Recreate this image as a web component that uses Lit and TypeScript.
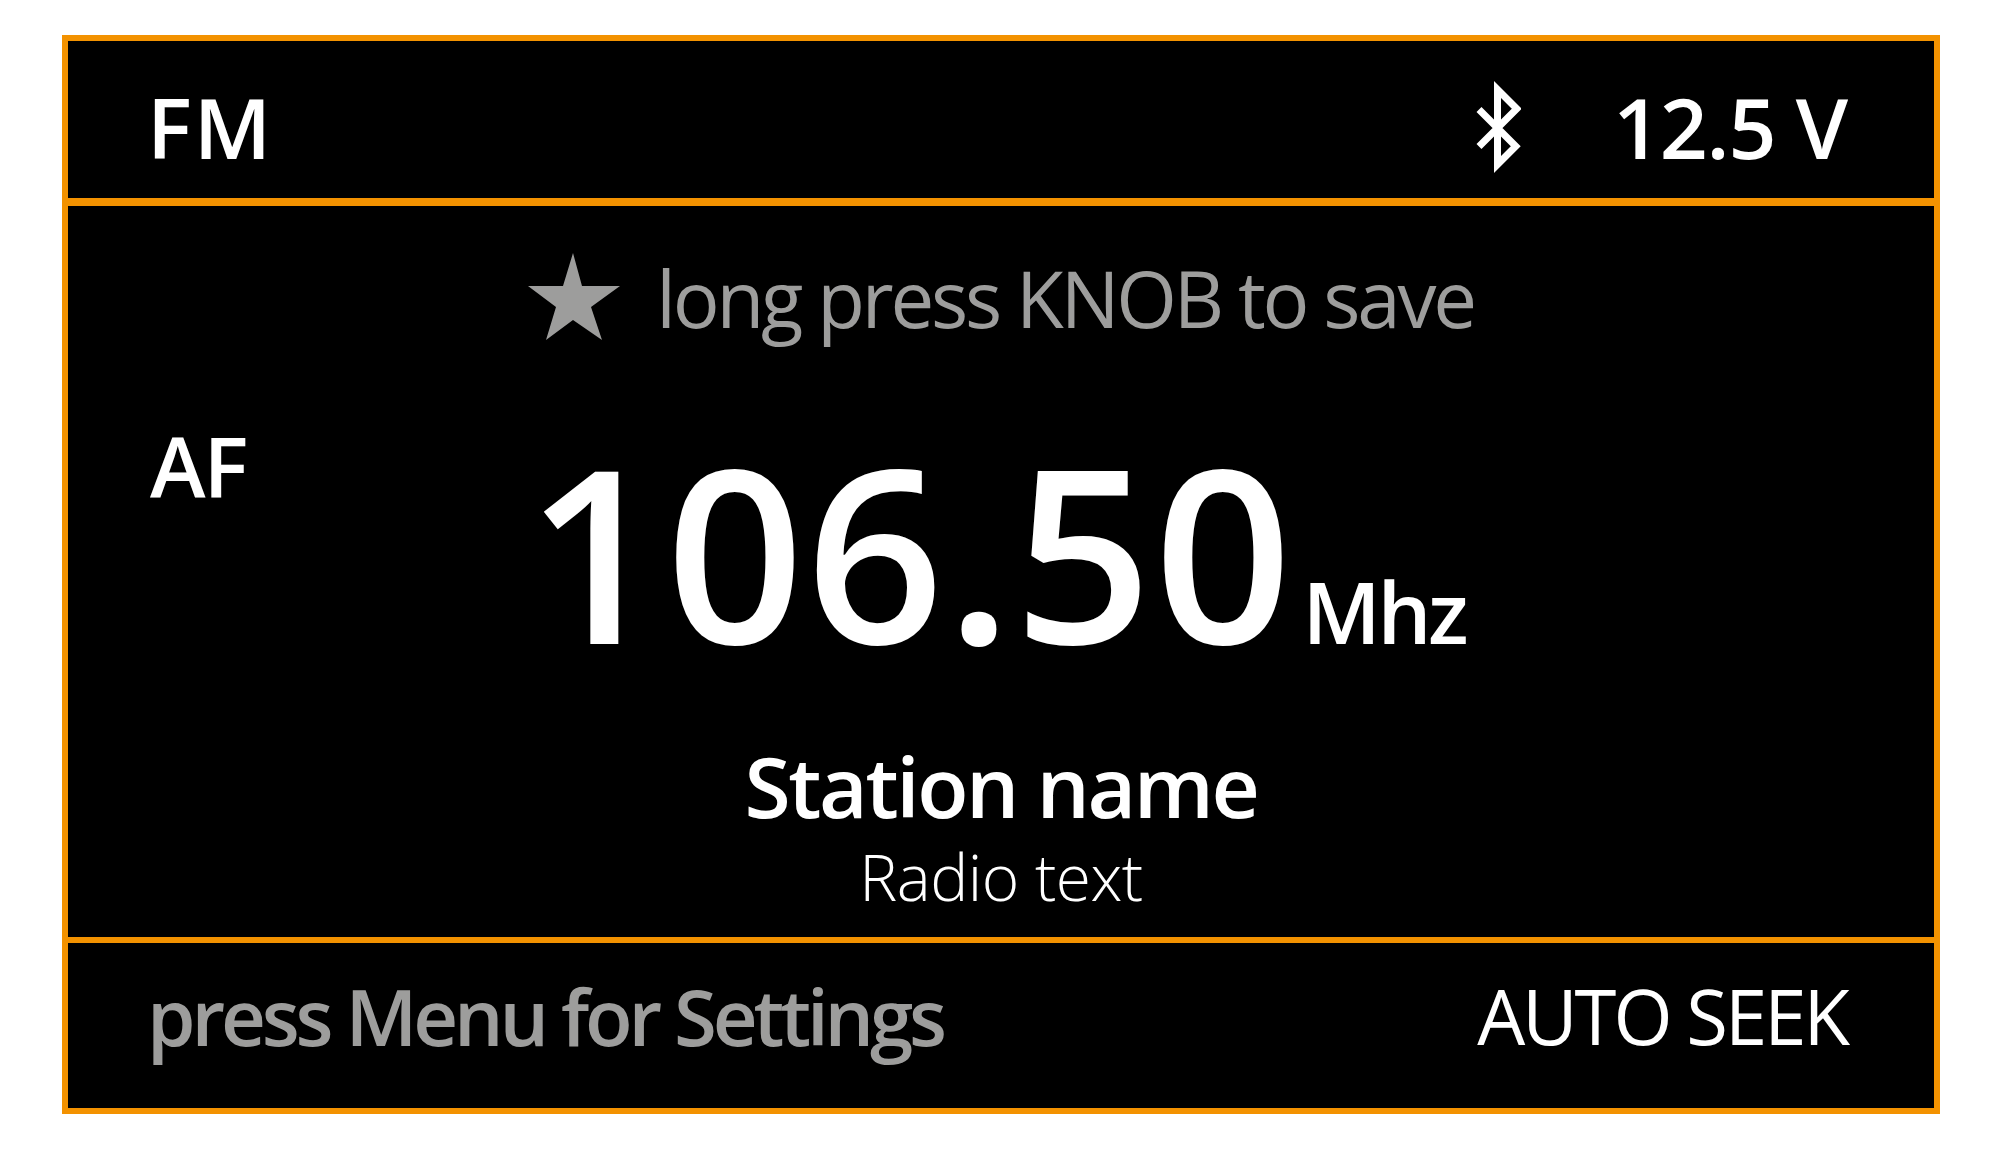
import { LitElement, html, css } from 'lit';
import { customElement } from 'lit/decorators.js';

@customElement('app-root')
class AppRoot extends LitElement {
    static styles = css`
    :host {
        display: block;
        background: #fff;
        height: 1154px;
        padding: 35px 60px 40px 62px;
        box-sizing: border-box;
        font-family: "Open Sans", "Noto Sans", sans-serif;
        color: #fff;
    }
    .radio {
        height: 1079px;
        box-sizing: border-box;
        border: 6px solid #f39200;
        background: #000;
        display: flex;
        flex-direction: column;
    }
    .top, .bottom {
        display: flex;
        justify-content: space-between;
        align-items: center;
        padding: 0 87px 0 79px;
    }
    .top {
        height: 165px;
        box-sizing: border-box;
        padding-top: 14px;
        border-bottom: 8px solid #f39200;
    }
    .bottom {
        flex: 1;
        padding-bottom: 20px;
        border-top: 6px solid #f39200;
    }
    .label {
        font-size: 84px;
        font-weight: 600;
        line-height: 1;
    }
    .band {
        letter-spacing: 2px;
    }
    .volt {
        letter-spacing: -1.2px;
    }
    .alt {
        letter-spacing: -2px;
    }
    .status {
        display: flex;
        align-items: center;
        gap: 92px;
    }
    .status svg {
        display: block;
    }
    .main {
        height: 731px;
        display: grid;
        grid-template-columns: 1fr auto 1fr;
    }
    .af {
        padding: 218px 0 0 82px;
    }
    .center {
        display: flex;
        flex-direction: column;
        align-items: center;
        padding-top: 46px;
    }
    .save {
        display: flex;
        align-items: center;
        gap: 36px;
        color: #9d9d9c;
        font-size: 78px;
        line-height: 92px;
        letter-spacing: -3.2px;
        white-space: nowrap;
    }
    .save svg {
        display: block;
        flex: none;
        margin-bottom: 4px;
    }
    .freq {
        display: flex;
        align-items: baseline;
        margin-top: 116px;
        margin-left: -11px;
        white-space: nowrap;
    }
    .value {
        font-size: 242px;
        font-weight: 600;
        line-height: 180px;
        letter-spacing: 1.6px;
    }
    .unit {
        font-size: 85px;
        font-weight: 600;
        margin-left: 9px;
        line-height: 1;
        letter-spacing: -3.5px;
    }
    .station {
        margin-top: 90px;
        font-size: 84px;
        font-weight: 600;
        line-height: 84px;
        letter-spacing: -2.4px;
        white-space: nowrap;
    }
    .text {
        margin-top: 13px;
        font-size: 64px;
        font-weight: 300;
        line-height: 72px;
        letter-spacing: -0.5px;
        white-space: nowrap;
    }
    .hint {
        color: #9d9d9c;
        font-size: 78px;
        font-weight: 600;
        line-height: 1;
        letter-spacing: -4.15px;
    }
    .mode {
        font-size: 76px;
        line-height: 1;
        letter-spacing: -3px;
    }
    `;
    render() {
        return html`
        <div class="radio">
            <div class="top">
                <div class="label band">FM</div>
                <div class="status">
                    <svg width="47" height="92" viewBox="0 0 47 92" fill="none" stroke="#fff" stroke-width="7">
                        <path d="M5 28.5L41.75 65.25L23.5 83.5V8.5L42.75 27.75L5 65.5"/>
                    </svg>
                    <div class="label volt">12.5 V</div>
                </div>
            </div>
            <div class="main">
                <div class="af"><div class="label alt">AF</div></div>
                <div class="center">
                    <div class="save">
                        <svg width="92" height="87" viewBox="0 0 92 87" fill="#9d9d9c">
                            <polygon points="45,0 54,33 92,33 63,54 74,87 45,67 18,87 28,54 0,33 35,33"/>
                        </svg>
                        <span>long press KNOB to save</span>
                    </div>
                    <div class="freq">
                        <span class="value">106.50</span>
                        <span class="unit">Mhz</span>
                    </div>
                    <div class="station">Station name</div>
                    <div class="text">Radio text</div>
                </div>
                <div></div>
            </div>
            <div class="bottom">
                <div class="hint">press Menu for Settings</div>
                <div class="mode">AUTO SEEK</div>
            </div>
        </div>
        `;
    }
}
